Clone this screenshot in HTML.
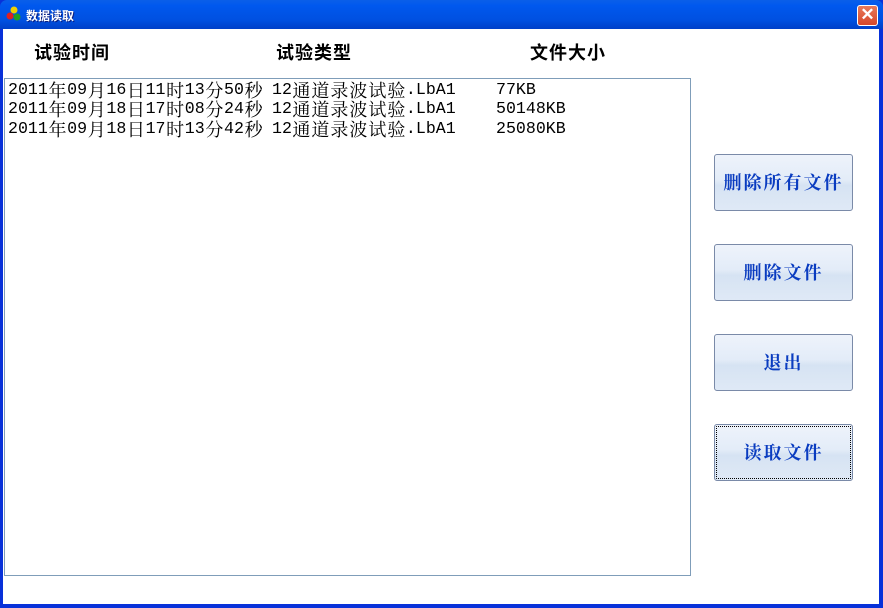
<!DOCTYPE html>
<html><head><meta charset="utf-8"><style>
*{margin:0;padding:0;box-sizing:border-box}
body{width:883px;height:608px;overflow:hidden;position:relative;background:#0831d9;font-family:"Liberation Sans","Noto Sans CJK SC",sans-serif}
.title{position:absolute;left:0;top:0;width:883px;height:29px;background:linear-gradient(#0a5fe8,#0058ee 20%,#0050e0 70%,#0040c8);border-radius:7px 7px 0 0}
.title span{position:absolute;left:26px;top:7px;color:#fff;font-weight:bold;font-size:12px;font-family:"Noto Sans CJK SC",sans-serif;text-shadow:1px 1px #0a1e80}
.close{position:absolute;left:857px;top:5px;width:21px;height:21px;background:linear-gradient(#e87a5a,#d6472a);border:1px solid #fff;border-radius:3px;color:#fff;font-size:17px;line-height:18px;text-align:center;font-weight:bold}
.client{position:absolute;left:3px;top:29px;width:876px;height:575px;background:#fff}
.h{position:absolute;top:10px;font-size:18px;letter-spacing:1px;font-weight:bold;font-family:"Noto Sans CJK SC",sans-serif;color:#000}
.list{position:absolute;left:1px;top:49px;width:687px;height:498px;border:1px solid #7f9db9;background:#fff}
.row{position:absolute;font-family:"Liberation Mono",monospace;font-size:16.6px;color:#000;white-space:pre;line-height:18px;height:18px}
.row b{font-weight:normal;font-family:"Noto Serif CJK SC",serif;font-size:18px;display:inline-block;width:19.3px;height:18px;line-height:18px;text-align:center;vertical-align:top}
.row.c2 b{width:19px}
.btn{position:absolute;left:711px;width:139px;height:57px;border:1px solid #7a8aa8;border-radius:3px;background:linear-gradient(#eef3fb,#e3ecf8 45%,#d6e3f3 55%,#dfe9f6);color:#0a3cc0;font-weight:bold;font-size:18px;font-family:"Noto Serif CJK SC",serif;text-align:center;line-height:55px;letter-spacing:2px}
</style></head><body>
<div class="title">
<svg style="position:absolute;left:6px;top:6px" width="16" height="16"><circle cx="8" cy="4" r="3.5" fill="#f0d000"/><circle cx="4" cy="10" r="3.5" fill="#e02020"/><circle cx="11" cy="11" r="3.5" fill="#20a020"/></svg>
<span>数据读取</span><div class="close">✕</div></div>
<div class="client">
<div class="h" style="left:31px">试验时间</div>
<div class="h" style="left:273px">试验类型</div>
<div class="h" style="left:527px">文件大小</div>
<div class="list">
<div class="row" style="left:3px;top:2px">2011<b>年</b>09<b>月</b>16<b>日</b>11<b>时</b>13<b>分</b>50<b>秒</b></div><div class="row c2" style="left:267px;top:2px">12<b>通</b><b>道</b><b>录</b><b>波</b><b>试</b><b>验</b>.LbA1</div><div class="row" style="left:491px;top:2px">77KB</div>
<div class="row" style="left:3px;top:21px">2011<b>年</b>09<b>月</b>18<b>日</b>17<b>时</b>08<b>分</b>24<b>秒</b></div><div class="row c2" style="left:267px;top:21px">12<b>通</b><b>道</b><b>录</b><b>波</b><b>试</b><b>验</b>.LbA1</div><div class="row" style="left:491px;top:21px">50148KB</div>
<div class="row" style="left:3px;top:41px">2011<b>年</b>09<b>月</b>18<b>日</b>17<b>时</b>13<b>分</b>42<b>秒</b></div><div class="row c2" style="left:267px;top:41px">12<b>通</b><b>道</b><b>录</b><b>波</b><b>试</b><b>验</b>.LbA1</div><div class="row" style="left:491px;top:41px">25080KB</div>
</div>
<div class="btn" style="top:125px">删除所有文件</div>
<div class="btn" style="top:215px">删除文件</div>
<div class="btn" style="top:305px">退出</div>
<div class="btn" style="top:395px;outline:1px dotted #000;outline-offset:-3px">读取文件</div>
</div>
</body></html>
